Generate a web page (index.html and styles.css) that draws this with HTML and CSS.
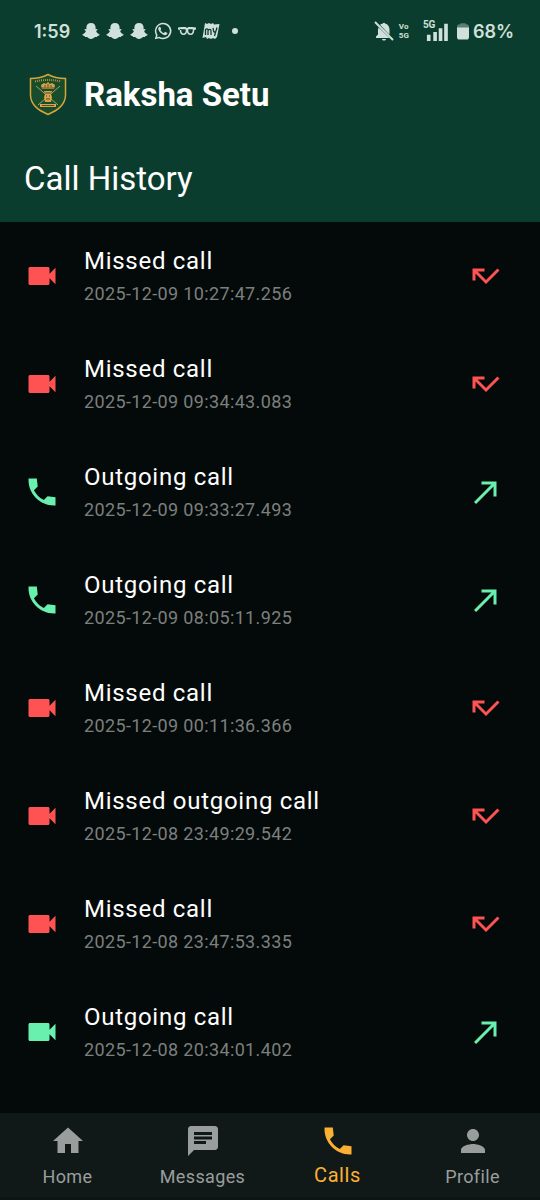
FILE: index.html
```html
<!DOCTYPE html>
<html lang="en">
<head>
  <meta charset="UTF-8">
  <meta name="viewport" content="width=device-width, initial-scale=1.0">
  <title>Raksha Setu</title>
  <link rel="stylesheet" href="styles.css">
</head>
<body>
  <!-- shared icons -->
  <svg class="sprite" aria-hidden="true">
    <symbol id="video" viewBox="0 0 24 24"><path d="M17 10.5V7c0-.55-.45-1-1-1H4c-.55 0-1 .45-1 1v10c0 .55.45 1 1 1h12c.55 0 1-.45 1-1v-3.5l4 4v-11l-4 4z"/></symbol>
    <symbol id="phone" viewBox="0 0 24 24"><path d="M21 15.46l-5.27-.61-2.52 2.52a15.045 15.045 0 0 1-6.59-6.59l2.53-2.53L8.54 3H3.03C2.45 13.18 10.82 21.55 21 20.97v-5.51z"/></symbol>
    <symbol id="missed" viewBox="0 0 24 24"><path d="M19.59 7L12 14.59 6.41 9H11V7H3v8h2v-4.59l7 7 9-9z"/></symbol>
    <symbol id="made" viewBox="0 0 24 24"><path d="M9 5v2h6.59L4 18.59 5.41 20 17 8.41V15h2V5z"/></symbol>
    <symbol id="snap" viewBox="0 0 18 18"><path d="M9 1c3 0 4.600 2 4.600 4.300v2l1.600-.2c.6.700 0 1.400-1.100 1.900.4 1.600 1.700 2.600 3.400 3.200.2 1-.8 1.500-2 1.700l-.5 1.200c-1.700-.2-2.600.1-3.700 1.100-.7.600-1.500.8-2.300.8s-1.600-.2-2.300-.8c-1.100-1-2-1.300-3.700-1.100l-.5-1.200c-1.200-.2-2.200-.7-2-1.700 1.700-.6 3-1.600 3.400-3.200-1.100-.5-1.700-1.200-1.100-1.900l1.600.2v-2C4.400 3 6 1 9 1z"/></symbol>
  </svg>

  <header class="header">
    <div class="status">
      <span class="time">1:59</span>
      <div class="notifications">
        <svg class="notif"><use href="#snap"/></svg>
        <svg class="notif"><use href="#snap"/></svg>
        <svg class="notif"><use href="#snap"/></svg>
        <svg class="notif" viewBox="0 0 24 24"><path d="M12.040 1A11 11 0 0 0 2.600 17.500L1 23l5.700-1.500A11 11 0 1 0 12.040 1zm0 2a9 9 0 1 1-5 16.500L4 20.200l.8-3A9 9 0 0 1 12.040 3z"/><path d="M8.500 6.900c-.3-.5-.5-.5-.9-.5-1 .2-1.900 1.300-1.900 2.700 0 3.100 4.900 8.200 9 8.500 1.600 0 3.200-1 3.200-2.500 0-.6-.1-.7-.5-.9l-2.200-1c-.4-.2-.7-.1-.9.2l-.9 1.100c-.2.200-.5.200-.8.100-1.700-.8-2.900-1.800-3.900-3.500-.2-.3 0-.5.200-.7l.6-.8c.1-.2.1-.4 0-.7z"/></svg>
        <svg class="notif" viewBox="0 0 18 18"><path class="line" d="M3 6.500h4.500c.7 0 1 .5 1 1.500 0 2.500-1 4.200-3 4.200S2.500 10.500 2.500 8M10.500 6.500H15c.5 0 .7.500.5 1.500 0 2.500-1 4.200-3 4.200s-3-1.700-3-4.200c0-1 .3-1.500 1-1.500z"/><path d="M0 5.500l4-.5h3.500L9 6l1.500-1H14l4 .5v2l-2 .5v-1H2v1l-2-.5z"/></svg>
        <svg class="notif" viewBox="0 0 18 18"><path d="M3 1l2 1 2-1 2 1 2-1 1 1.500L17.500 2 15 15l-2 2-2-1-2 1-2-1-2 1-1-2-3.500 1z"/><path class="mark" d="M3.500 13V7.500c2-1.500 3 0 2.500 2V13m0-4.500c2-2 3.300-1 3 1V13M11 6l.7 3.500c.5 1 2 .5 2.500-1L15 5.500m-1 3L12.500 14"/></svg>
        <span class="dot"></span>
      </div>
      <div class="system">
        <svg class="muted" viewBox="0 0 20 20"><path d="M9 2.500C9 1.500 11 1.500 11 2.500c3 .7 4.500 3 4.500 6v5.300L6 3.800c.7-.6 1.800-1.100 3-1.300zM4.600 6.500L15.500 17H2v-1.500l2-2V9c0-1 .2-1.800.6-2.500zM8 18h4c-.3 2-3.700 2-4 0z"/><path class="slash" d="M1 1l18 18"/></svg>
        <span class="volte"><span>Vo</span><span>5G</span></span>
        <span class="network">
          <svg class="bars" viewBox="0 0 26 22"><path d="M3 15h4v7H3zM10 12h4v10h-4zM16 8h4v14h-4zM22 3h4v19h-4z"/></svg>
          <span class="network-type">5G</span>
        </span>
        <svg class="battery" viewBox="0 0 14 20"><path class="empty" d="M4 2V1h6v1h1c2 0 3 1 3 3v2H0V5c0-2 1-3 3-3z"/><path d="M0 6h14v11c0 2-1 3-3 3H3c-2 0-3-1-3-3z"/></svg>
        <span class="percent">68%</span>
      </div>
    </div>
    <div class="brand">
      <svg class="crest" viewBox="0 0 48 48">
        <path class="shield" d="M6.500 8.500c7 0 12-1 17.500-4 5.500 3 10.500 4 17.500 4v17C41 35 34 40 24 44.500 14 40 7 35 6.500 25.500z"/>
        <path class="motto" d="M11 11.500q13-3 26 0"/>
        <path class="swords" d="M12 16l22 19M36 16L14 35"/>
        <path class="gold" d="M18 19l-1-4 3-2 2 1 2-2 2 2 2-1 3 2-1 4zM20 21h8l-1 3 1 3-1 5h-6l-1-5 1-3z"/>
        <path class="detail" d="M18 18h12M21 15v2M24 14v3M27 15v2M21 23h6M22 26h1M25 26h1M22 29h4"/>
        <path class="gold" d="M16 34h16v3H16z"/>
        <path class="detail" d="M18 35.500h12"/>
      </svg>
      <span class="brand-name">Raksha Setu</span>
    </div>
    <h1>Call History</h1>
  </header>

  <main>
    <ul class="calls">
      <li class="call missed">
        <svg class="icon"><use href="#video"/></svg>
        <div class="info"><div class="name">Missed call</div><div class="date">2025-12-09 10:27:47.256</div></div>
        <svg class="icon"><use href="#missed"/></svg>
      </li>
      <li class="call missed">
        <svg class="icon"><use href="#video"/></svg>
        <div class="info"><div class="name">Missed call</div><div class="date">2025-12-09 09:34:43.083</div></div>
        <svg class="icon"><use href="#missed"/></svg>
      </li>
      <li class="call outgoing">
        <svg class="icon"><use href="#phone"/></svg>
        <div class="info"><div class="name">Outgoing call</div><div class="date">2025-12-09 09:33:27.493</div></div>
        <svg class="icon"><use href="#made"/></svg>
      </li>
      <li class="call outgoing">
        <svg class="icon"><use href="#phone"/></svg>
        <div class="info"><div class="name">Outgoing call</div><div class="date">2025-12-09 08:05:11.925</div></div>
        <svg class="icon"><use href="#made"/></svg>
      </li>
      <li class="call missed">
        <svg class="icon"><use href="#video"/></svg>
        <div class="info"><div class="name">Missed call</div><div class="date">2025-12-09 00:11:36.366</div></div>
        <svg class="icon"><use href="#missed"/></svg>
      </li>
      <li class="call missed">
        <svg class="icon"><use href="#video"/></svg>
        <div class="info"><div class="name">Missed outgoing call</div><div class="date">2025-12-08 23:49:29.542</div></div>
        <svg class="icon"><use href="#missed"/></svg>
      </li>
      <li class="call missed">
        <svg class="icon"><use href="#video"/></svg>
        <div class="info"><div class="name">Missed call</div><div class="date">2025-12-08 23:47:53.335</div></div>
        <svg class="icon"><use href="#missed"/></svg>
      </li>
      <li class="call outgoing">
        <svg class="icon"><use href="#video"/></svg>
        <div class="info"><div class="name">Outgoing call</div><div class="date">2025-12-08 20:34:01.402</div></div>
        <svg class="icon"><use href="#made"/></svg>
      </li>
    </ul>
  </main>

  <nav class="tabs">
    <a class="tab" href="#home">
      <svg class="icon" viewBox="0 0 24 24"><path d="M10 20v-6h4v6h5v-8h3L12 3 2 12h3v8z"/></svg>
      <span>Home</span>
    </a>
    <a class="tab" href="#messages">
      <svg class="icon" viewBox="0 0 24 24"><path d="M20 2H4c-1.100 0-1.990.9-1.990 2L2 22l4-4h14c1.100 0 2-.9 2-2V4c0-1.100-.9-2-2-2zM6 9h12v2H6V9zm8 5H6v-2h8v2zm4-6H6V6h12v2z"/></svg>
      <span>Messages</span>
    </a>
    <a class="tab active" href="#calls" aria-current="page">
      <svg class="icon"><use href="#phone"/></svg>
      <span>Calls</span>
    </a>
    <a class="tab" href="#profile">
      <svg class="icon" viewBox="0 0 24 24"><path d="M12 12c2.210 0 4-1.790 4-4s-1.790-4-4-4-4 1.790-4 4 1.790 4 4 4zm0 2c-2.670 0-8 1.340-8 4v2h16v-2c0-2.660-5.330-4-8-4z"/></svg>
      <span>Profile</span>
    </a>
  </nav>
</body>
</html>
```
FILE: styles.css
```css
* { box-sizing: border-box; }

body {
  margin: 0;
  min-height: 100vh;
  display: flex;
  flex-direction: column;
  font-family: Roboto, sans-serif;
  background: #040a09;
  color: #fff;
}

svg {
  flex-shrink: 0;
  fill: currentColor;
}

.sprite {
  position: absolute;
  width: 0;
  height: 0;
}

.header {
  background: #0b3d2e;
}

/* status bar */
.status {
  display: flex;
  align-items: center;
  height: 62px;
  padding: 0 26px 0 34px;
  font-family: Inter, sans-serif;
  font-weight: 600;
  color: #d0e0da;
}

.time {
  font-size: 18px;
}

.notifications {
  display: flex;
  align-items: center;
  gap: 6px;
  margin-left: 12px;
}

.notif {
  width: 18px;
  height: 18px;
}

.line {
  fill: none;
  stroke: currentColor;
  stroke-width: 1.5;
}

.mark {
  fill: none;
  stroke: #0b3d2e;
  stroke-width: 1.3;
}

.dot {
  width: 6px;
  height: 6px;
  margin-left: 6px;
  border-radius: 50%;
  background: currentColor;
}

.system {
  display: flex;
  align-items: center;
  margin-left: auto;
}

.muted {
  width: 20px;
  height: 20px;
}

.slash {
  stroke: currentColor;
  stroke-width: 2;
}

.volte {
  display: flex;
  flex-direction: column;
  margin: 0 14px 0 5px;
  font-family: Roboto, sans-serif;
  font-size: 8px;
  font-weight: 700;
  line-height: 9px;
}

.network {
  position: relative;
}

.bars {
  display: block;
  width: 26px;
  height: 20px;
}

.network-type {
  position: absolute;
  top: -1px;
  left: 0;
  font-family: Roboto, sans-serif;
  font-size: 10px;
  font-weight: 700;
  line-height: 10px;
}

.battery {
  width: 12px;
  height: 20px;
  margin: 0 4px 0 8px;
}

.empty {
  opacity: 0.4;
}

.percent {
  font-size: 18px;
}

/* title area */
.brand {
  display: flex;
  align-items: center;
  gap: 12px;
  height: 64px;
  padding: 0 24px;
}

.crest {
  width: 48px;
  height: 48px;
}

.shield {
  fill: #174d2b;
  stroke: #d6a43b;
  stroke-width: 1.5;
}

.motto {
  fill: none;
  stroke: #a99443;
  stroke-width: 2;
  stroke-dasharray: 1 1;
}

.swords {
  stroke: #b29a61;
}

.gold {
  fill: #d5a548;
}

.detail {
  fill: none;
  stroke: #544b26;
}

.brand-name {
  font-size: 33px;
  font-weight: 700;
}

h1 {
  margin: 0;
  padding: 31px 24px 22px;
  font-size: 33px;
  font-weight: 400;
  line-height: 43px;
}

/* call list */
main {
  flex: 1;
}

.calls {
  margin: 0;
  padding: 0;
  list-style: none;
}

.call {
  display: flex;
  align-items: center;
  gap: 24px;
  height: 108px;
  padding: 0 36px 0 24px;
}

.icon {
  width: 36px;
  height: 36px;
}

.info {
  flex: 1;
}

.name {
  color: #fff;
  font-size: 24px;
  line-height: 36px;
  letter-spacing: 0.03em;
}

.date {
  color: #7c7f7e;
  font-size: 18px;
  line-height: 30px;
  letter-spacing: 0.02em;
}

.missed .icon { color: #ff5252; }
.outgoing .icon { color: #69f0ae; }

/* bottom navigation */
.tabs {
  display: flex;
  height: 87px;
  background: #111918;
  border-bottom: 3px solid #0d1413;
}

.tab {
  flex: 1;
  display: flex;
  flex-direction: column;
  align-items: center;
  padding-top: 10px;
  color: #999e9d;
  font-size: 18px;
  line-height: 36px;
  letter-spacing: 0.02em;
  text-decoration: none;
}

.active {
  color: #fbb034;
  font-size: 20px;
  line-height: 32px;
  letter-spacing: 0.03em;
}
```
